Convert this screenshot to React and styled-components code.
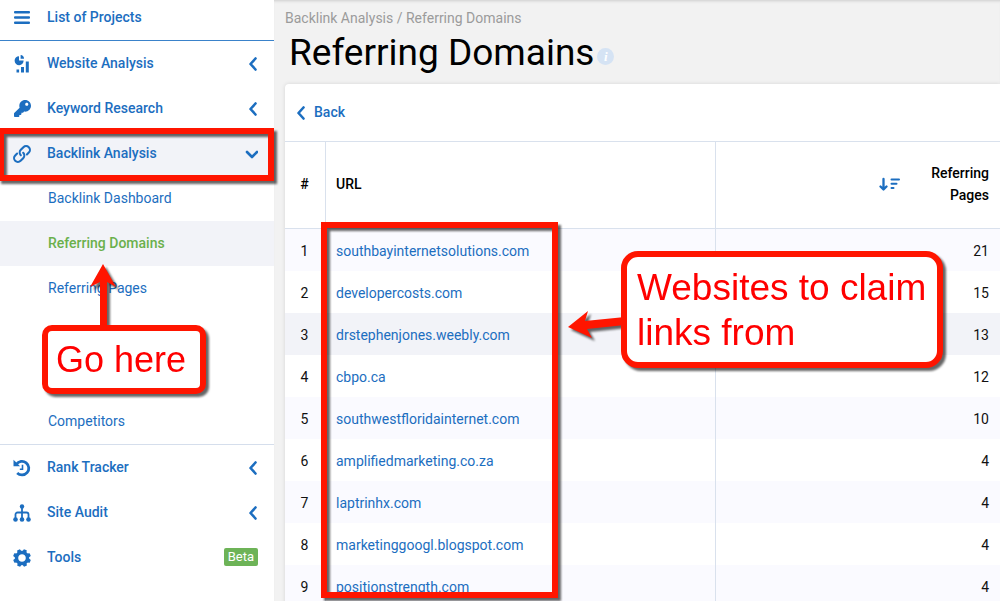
import styled, { createGlobalStyle, css } from "styled-components";
import { FaKey } from "react-icons/fa";

const GlobalStyle = createGlobalStyle`
    * {
        box-sizing: border-box;
    }
    body {
        margin: 0;
        overflow: hidden;
        background: #f2f2f2;
        font-family: Roboto, "Liberation Sans", sans-serif;
        font-size: 14px;
        color: #111;
    }
    a {
        color: #1c6ec0;
        text-decoration: none;
    }
`
const Page = styled.div`
    position: relative;
    display: flex;
    align-items: stretch;
    height: 100vh;
    overflow: hidden;
`
const Sidebar = styled.nav`
    flex: 0 0 274px;
    background: #fff;
`
const Projects = styled.a`
    display: flex;
    align-items: center;
    height: 41px;
    padding: 0 0 6px 47px;
    border-bottom: 1px solid #3a82ca;
    font-weight: 500;
`
const Group = styled.ul`
    list-style: none;
    margin: 0;
    padding: 0;
    ${({ $lined }) => $lined && css`
        border-top: 1px solid #d5deec;
    `}
`
const Item = styled.a`
    display: flex;
    align-items: center;
    height: 45px;
    padding: 0 16px 2px 47px;
    font-weight: 500;
    background: ${({ $open }) => ($open ? "#f2f3f8" : "transparent")};
`
const Icon = styled.span`
    display: flex;
    justify-content: center;
    width: 18px;
    margin: 2px 16px 0 -34px;
`
const Label = styled.span`
    flex: 1;
`
const SubList = styled.ul`
    list-style: none;
    margin: 0;
    padding: 0;
`
const SubItem = styled.a`
    display: flex;
    align-items: center;
    height: 45px;
    padding: 0 0 2px 48px;
    ${({ $active }) => $active && css`
        background: #f2f3f8;
        color: #6ab04c;
        font-weight: 500;
    `}
`
const SubGap = styled.li`
    height: 88px;
`
const Beta = styled.span`
    padding: 0 4px;
    border-radius: 2px;
    background: #6db357;
    color: #fff;
    font-size: 13px;
    font-weight: 400;
    line-height: 18px;
`
const Main = styled.main`
    flex: 1;
    min-width: 0;
    padding: 0 0 0 11px;
    box-shadow: inset 0 3px 3px -2px #ccc;
`
const Crumbs = styled.div`
    padding: 10px 0 0 0;
    line-height: 16px;
    color: #9b9b9b;
`
const TitleRow = styled.div`
    display: flex;
    align-items: center;
    gap: 3px;
    height: 58px;
    padding: 0 0 6px 4px;
`
const H1 = styled.h1`
    margin: 0;
    font-size: 37px;
    font-weight: 400;
    color: #000;
`
const Info = styled.button`
    width: 17px;
    height: 17px;
    margin: 8px 0 0 0;
    padding: 0;
    border: 0;
    border-radius: 50%;
    background: #d5e3f4;
    color: #fff;
    font: italic 700 13px/17px "Liberation Serif", serif;
`
const Card = styled.section`
    background: #fff;
    border-radius: 4px 0 0 0;
    box-shadow: 0 0 4px rgba(0, 0, 0, 0.12);
`
const Back = styled.a`
    display: flex;
    align-items: center;
    gap: 8px;
    height: 57px;
    padding: 0 0 2px 11px;
    font-weight: 500;
`
const Table = styled.table`
    width: 100%;
    border-collapse: separate;
    border-spacing: 0;
    table-layout: fixed;
`
const Th = styled.th`
    width: ${({ $w }) => $w || "auto"};
    height: 88px;
    padding: 0 11px 2px 10px;
    border: solid #d9e1ed;
    border-width: 1px 1px 1px 0;
    font-weight: 500;
    line-height: 22px;
    color: #000;
    text-align: ${({ $align }) => $align || "left"};
    &:last-child {
        border-right: 0;
    }
`
const Sort = styled.button`
    display: flex;
    align-items: center;
    justify-content: flex-end;
    gap: 31px;
    width: 100%;
    padding: 0;
    border: 0;
    background: none;
    font: inherit;
    color: inherit;
    text-align: right;
`
const Tr = styled.tr`
    background: ${({ $hover }) => ($hover ? "#f2f3f8" : "#fff")};
    &:nth-child(odd) {
        background: ${({ $hover }) => ($hover ? "#f2f3f8" : "#fafaff")};
    }
`
const Td = styled.td`
    height: 42px;
    padding: 1px 11px 0 10px;
    border-right: 1px solid #d9e1ed;
    text-align: ${({ $align }) => $align || "left"};
    &:last-child {
        border-right: 0;
    }
`

// red marks laid over the page
const Frame = styled.div`
    position: absolute;
    left: ${({ $x }) => $x}px;
    top: ${({ $y }) => $y}px;
    width: ${({ $w }) => $w}px;
    height: ${({ $h }) => $h}px;
    border: 6px solid #ff1500;
    filter: drop-shadow(3px 3px 1px rgba(0, 0, 0, 0.6));
    pointer-events: none;
`
const Callout = styled(Frame)`
    display: flex;
    align-items: center;
    padding: 0 0 0 ${({ $pad }) => $pad}px;
    border-radius: ${({ $round }) => $round}px;
    background: #fff;
    color: #ff0000;
    font-family: "Liberation Sans", Arial, sans-serif;
    font-size: ${({ $size }) => $size}px;
    line-height: 45px;
    white-space: nowrap;
`
const Arrows = styled.svg`
    position: absolute;
    left: 0;
    top: 0;
    filter: drop-shadow(3px 3px 1px rgba(0, 0, 0, 0.6));
    pointer-events: none;
`

const Chevron = ({ down }) => (
    <svg width={down ? 14 : 10} height="16" viewBox={down ? "0 0 14 16" : "0 0 10 16"} fill="none" stroke="#1c6ec0" strokeWidth="2.6" strokeLinecap="round" strokeLinejoin="round">
        <path d={down ? "M3 7l5 5 5-5" : "M7.5 3.5L2.500 9l5 5.500"} />
    </svg>
)

const Bars = () => (
    <svg width="18" height="14" viewBox="0 0 18 14" fill="#1c6ec0">
        <rect x="1" y="0" width="16" height="2.6" rx="1" />
        <rect x="1" y="5.2" width="16" height="2.6" rx="1" />
        <rect x="1" y="10.4" width="16" height="2.6" rx="1" />
    </svg>
)

const Stats = () => (
    <svg width="18" height="18" viewBox="0 0 18 18" fill="#1c6ec0">
        <path d="M6 1.200V5.500h4.600A4.500 4.500 0 1 1 6 1.200z" />
        <path d="M7.600 0a3.800 3.800 0 0 1 3.400 3.800H7.600z" />
        <rect x="3.500" y="14.500" width="2.600" height="3" />
        <rect x="8" y="12" width="3" height="5.500" />
        <rect x="12.800" y="6.500" width="3" height="11" />
    </svg>
)

const Chain = () => (
    <svg width="18" height="18" viewBox="0 0 18 18" fill="none" stroke="#1c6ec0" strokeWidth="2.100" strokeLinecap="round">
        <path d="M7.800 10.200a3.900 3.900 0 0 1 0-5.400l2.600-2.600a3.800 3.800 0 0 1 5.400 5.400l-1.900 1.900" />
        <path d="M10.200 7.800a3.900 3.900 0 0 1 0 5.400l-2.600 2.600a3.800 3.800 0 0 1-5.400-5.400l1.900-1.900" />
    </svg>
)

const History = () => (
    <svg width="18" height="18" viewBox="0 0 18 18" fill="none" stroke="#1c6ec0">
        <path d="M3.400 5.300A6.800 6.800 0 1 1 4.200 14" strokeWidth="2.800" />
        <path d="M.5.8v6.400h6.600z" fill="#1c6ec0" stroke="none" />
        <path d="M9.500 5.800v4.400H6.800" strokeWidth="1.600" />
    </svg>
)

const Tree = () => (
    <svg width="18" height="18" viewBox="0 0 18 18" fill="#1c6ec0">
        <circle cx="9" cy="2.500" r="2.200" />
        <circle cx="2.500" cy="15.500" r="2.300" />
        <circle cx="9" cy="15.500" r="2.300" />
        <circle cx="15.500" cy="15.500" r="2.300" />
        <path d="M9 3v12M2.500 15v-4.500a2 2 0 0 1 2-2h9a2 2 0 0 1 2 2V15" fill="none" stroke="#1c6ec0" strokeWidth="1.800" />
    </svg>
)

const Gear = () => (
    <svg width="18" height="18" viewBox="-9 -9 18 18" fill="#1c6ec0">
        <circle r="5.500" fill="none" stroke="#1c6ec0" strokeWidth="3.400" />
        {
            [22, 67, 112, 157, 202, 247, 292, 337].map(deg => (
                <path key={deg} d="M-2.300-6l.8-2.900h3l.8 2.900z" transform={`rotate(${deg})`} />
            ))
        }
    </svg>
)

const SortIcon = () => (
    <svg width="21" height="16" viewBox="0 0 21 16" fill="none" stroke="#1c6ec0" strokeWidth="2.300" strokeLinecap="round" strokeLinejoin="round">
        <path d="M4.500 3v10M1.500 10.500l3 3 3-3" />
        <path d="M12.500 3.500h7.500M12.500 7.800h5M12.500 12.100h2" strokeWidth="2" />
    </svg>
)

const sites = [
    ["southbayinternetsolutions.com", 21],
    ["developercosts.com", 15],
    ["drstephenjones.weebly.com", 13],
    ["cbpo.ca", 12],
    ["southwestfloridainternet.com", 10],
    ["amplifiedmarketing.co.za", 4],
    ["laptrinhx.com", 4],
    ["marketinggoogl.blogspot.com", 4],
    ["positionstrength.com", 4],
]

const MenuItem = ({ icon, label, open, children }) => (
    <li>
        <Item href="#" $open={open}>
            <Icon>{icon}</Icon>
            <Label>{label}</Label>
            {children || <Chevron down={open} />}
        </Item>
    </li>
)

const App = () => {
    return (
        <Page>
            <GlobalStyle />
            <Sidebar>
                <Projects href="#">
                    <Icon><Bars /></Icon>
                    <Label>List of Projects</Label>
                </Projects>
                <Group>
                    <MenuItem icon={<Stats />} label="Website Analysis" />
                    <MenuItem icon={<FaKey size={17} />} label="Keyword Research" />
                    <MenuItem icon={<Chain />} label="Backlink Analysis" open />
                </Group>
                <SubList>
                    <li><SubItem href="#">Backlink Dashboard</SubItem></li>
                    <li><SubItem href="#" $active>Referring Domains</SubItem></li>
                    <li><SubItem href="#">Referring Pages</SubItem></li>
                    <SubGap />
                    <li><SubItem href="#">Competitors</SubItem></li>
                </SubList>
                <Group $lined>
                    <MenuItem icon={<History />} label="Rank Tracker" />
                    <MenuItem icon={<Tree />} label="Site Audit" />
                    <MenuItem icon={<Gear />} label="Tools"><Beta>Beta</Beta></MenuItem>
                </Group>
            </Sidebar>

            <Main>
                <Crumbs>Backlink Analysis / Referring Domains</Crumbs>
                <TitleRow>
                    <H1>Referring Domains</H1>
                    <Info aria-label="Info">i</Info>
                </TitleRow>
                <Card>
                    <Back href="#"><Chevron />Back</Back>
                    <Table>
                        <thead>
                            <tr>
                                <Th $w="41px" $align="center">#</Th>
                                <Th $w="390px">URL</Th>
                                <Th $align="right">
                                    <Sort><SortIcon /><span>Referring<br />Pages</span></Sort>
                                </Th>
                            </tr>
                        </thead>
                        <tbody>
                            {
                                sites.map(([url, pages], idx) => (
                                    <Tr key={url} $hover={idx === 2}>
                                        <Td $align="center">{idx + 1}</Td>
                                        <Td><a href="#">{url}</a></Td>
                                        <Td $align="right">{pages}</Td>
                                    </Tr>
                                ))
                            }
                        </tbody>
                    </Table>
                </Card>
            </Main>

            <Frame $x={-2} $y={128} $w={276} $h={53} />
            <Frame $x={321} $y={222} $w={237} $h={376} />
            <Arrows width="640" height="360" viewBox="0 0 640 360" fill="#ff1500">
                <path d="M103 264l13 23-9-5v46h-7v-46l-10 5z" />
                <path d="M568 327l20-16-3 10 40-4v8l-38 4 5 9z" />
            </Arrows>
            <Callout $x={42} $y={325} $w={164} $h={69} $pad={8} $round={10} $size={36}>Go here</Callout>
            <Callout $x={621} $y={251} $w={322} $h={117} $pad={10} $round={17} $size={37}>Websites to claim<br />links from</Callout>
        </Page>
    )
}

export default App;
